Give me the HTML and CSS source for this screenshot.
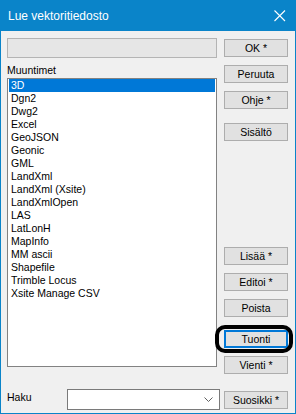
FILE: index.html
```html
<!DOCTYPE html>
<html lang="fi">
<head>
<meta charset="utf-8">
<title>Lue vektoritiedosto</title>
<link rel="stylesheet" href="styles.css">
</head>
<body>
<div class="window">
  <div class="titlebar">
    <span class="title">Lue vektoritiedosto</span>
    <svg class="close" width="12" height="12" viewBox="0 0 12 12"><path d="M0.5 0.5 L11 11 M11 0.5 L0.5 11" stroke="#fff" stroke-width="1.1" fill="none"/></svg>
  </div>
  <div class="main">
    <div class="left">
      <div class="field"></div>
      <div class="label">Muuntimet</div>
      <ul class="list">
        <li class="sel">3D</li>
        <li>Dgn2</li>
        <li>Dwg2</li>
        <li>Excel</li>
        <li>GeoJSON</li>
        <li>Geonic</li>
        <li>GML</li>
        <li>LandXml</li>
        <li>LandXml (Xsite)</li>
        <li>LandXmlOpen</li>
        <li>LAS</li>
        <li>LatLonH</li>
        <li>MapInfo</li>
        <li>MM ascii</li>
        <li>Shapefile</li>
        <li>Trimble Locus</li>
        <li>Xsite Manage CSV</li>
      </ul>
      <div class="haku">
        <span class="haku-label">Haku</span>
        <div class="combo">
          <svg class="chev" width="9" height="5" viewBox="0 0 9 5"><path d="M0.5 0.5 L4.5 4.5 L8.5 0.5" stroke="#606060" stroke-width="1" fill="none"/></svg>
        </div>
      </div>
    </div>
    <div class="right">
      <button class="btn b-ok">OK *</button>
      <button class="btn b-8">Peruuta</button>
      <button class="btn b-8">Ohje *</button>
      <button class="btn b-14">Sisältö</button>
      <button class="btn b-lisaa">Lisää *</button>
      <button class="btn b-8">Editoi *</button>
      <button class="btn b-8">Poista</button>
      <div class="focuswrap">
        <button class="btn focus">Tuonti</button>
        <span class="ring"></span>
      </div>
      <button class="btn b-8">Vienti *</button>
      <button class="btn b-suos">Suosikki *</button>
    </div>
  </div>
</div>
</body>
</html>
```
FILE: styles.css
```css
* { box-sizing: border-box; }
html, body { margin: 0; padding: 0; background: #f0f0f0; }
body {
  font-family: "Liberation Sans", Arial, sans-serif;
  font-size: 10.5px;
  color: #000;
}
.window {
  width: 296px;
  height: 414px;
  border: 1px solid #0a84c9;
  border-top: none;
  background: #f0f0f0;
  display: flex;
  flex-direction: column;
}
.titlebar {
  height: 31px;
  background: #0a84c9;
  color: #fff;
  display: flex;
  align-items: center;
  justify-content: space-between;
  padding: 0 9px 0 8px;
  margin: 0 -1px;
}
.title { font-size: 12px; line-height: 16px; }
.close { display: block; margin-right: 1px; }
.main {
  display: grid;
  grid-template-columns: 210px 64px;
  column-gap: 7px;
  padding: 0 7px 0 6px;
}
.left { display: flex; flex-direction: column; }
.field {
  margin-top: 7px;
  height: 20px;
  background: #e6e6e6;
  border: 1px solid #b4b4b4;
}
.label { padding-top: 6px; line-height: 13px; margin-bottom: 1px; }
.list {
  list-style: none;
  margin: 0;
  padding: 0 1px;
  height: 289px;
  background: #fff;
  border: 1px solid #828282;
}
.list li {
  height: 13px;
  line-height: 13px;
  padding-left: 2px;
  white-space: nowrap;
}
.list li.sel { background: #0078d7; color: #fff; }
.haku {
  margin-top: 22px;
  display: flex;
  align-items: center;
  width: 213px;
}
.haku-label { width: 60px; line-height: 13px; margin-top: -5px; }
.combo {
  width: 153px;
  height: 21px;
  background: #fff;
  border: 1px solid #7a7a7a;
  display: flex;
  align-items: center;
  justify-content: flex-end;
  padding-right: 6px;
}
.chev { display: block; }
.right { display: flex; flex-direction: column; }
.btn {
  width: 64px;
  height: 18px;
  padding: 0;
  margin: 0;
  font: inherit;
  line-height: 16px;
  color: #000;
  background: #e1e1e1;
  border: 1px solid #adadad;
  border-radius: 0;
}
.b-ok { margin-top: 8px; }
.b-8 { margin-top: 8px; }
.b-14 { margin-top: 14px; }
.b-lisaa { margin-top: 106px; }
.b-suos { margin-top: 17px; }
.focuswrap { position: relative; margin-top: 13px; height: 18px; }
.focus { border: 2px solid #0078d7; line-height: 14px; }
.ring {
  position: absolute;
  left: -9px;
  top: -5px;
  width: 78px;
  height: 28px;
  border: 4px solid #000;
  border-radius: 10px;
}
```
